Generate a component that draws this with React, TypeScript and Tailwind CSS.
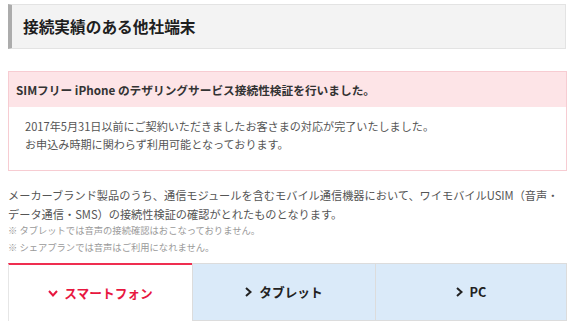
import React from "react";

const font = { fontFamily: '"Noto Sans CJK JP", "Noto Sans", sans-serif' };

function ChevronDown() {
  return (
    <svg width="10" height="7" viewBox="0 0 10 7" className="mr-[6px]">
      <polyline points="1,1 5,5.5 9,1" fill="none" stroke="#e8173f" strokeWidth="2" />
    </svg>
  );
}

function ChevronRight() {
  return (
    <svg width="7" height="10" viewBox="0 0 7 10" className="mr-[7px]">
      <polyline points="1,1 5.5,5 1,9" fill="none" stroke="#222" strokeWidth="2" />
    </svg>
  );
}

export default function App() {
  return (
    <div className="w-[580px] h-[334px] bg-white pt-[4px] pl-[8px] overflow-hidden" style={font}>
      <div className="w-[558px] h-[45px] border border-[#e3e3e3] border-l-[4px] border-l-[#acacac] bg-[#f3f3f3] flex items-center pl-[11px]">
        <span className="text-[15.7px] font-bold text-[#1e1e1e] leading-none">接続実績のある他社端末</span>
      </div>

      <div className="w-[559px] mt-[22px] border border-[#f7ccd2]">
        <div className="h-[35px] bg-[#fde4e7] flex items-center pl-[7px]">
          <span className="text-[11.7px] font-bold text-[#333] leading-none">
            SIMフリー iPhone のテザリングサービス接続性検証を行いました。
          </span>
        </div>
        <div className="pt-[10px] pb-[17px] pl-[16px] text-[11.1px] leading-[18px] text-[#555]">
          2017年5月31日以前にご契約いただきましたお客さまの対応が完了いたしました。
          <br />
          お申込み時期に関わらず利用可能となっております。
        </div>
      </div>

      <div className="mt-[15px] text-[11.2px] leading-[19px] text-[#555]">
        メーカーブランド製品のうち、通信モジュールを含むモバイル通信機器において、ワイモバイルUSIM（音声・
        <br />
        データ通信・SMS）の接続性検証の確認がとれたものとなります。
      </div>
      <div className="-mt-[2px] text-[9.3px] leading-[17px] text-[#9a9a9a]">
        ※ タブレットでは音声の接続確認はおこなっておりません。
        <br />
        ※ シェアプランでは音声はご利用になれません。
      </div>

      <div className="w-[559px] mt-[7px] grid grid-cols-[184px_184px_191px] h-[58px]">
        <div className="border-t-[2px] border-t-[#ef2e50] border-l border-l-[#e6e6e6] bg-white flex items-center justify-center">
          <ChevronDown />
          <span className="text-[12.7px] font-bold text-[#e8173f] leading-none">スマートフォン</span>
        </div>
        <div className="border border-[#dcdcdc] bg-[#daeaf9] flex items-center justify-center">
          <ChevronRight />
          <span className="text-[12.7px] font-bold text-[#222] leading-none">タブレット</span>
        </div>
        <div className="border border-l-0 border-[#dcdcdc] bg-[#daeaf9] flex items-center justify-center">
          <ChevronRight />
          <span className="text-[12.7px] font-bold text-[#222] leading-none">PC</span>
        </div>
      </div>
    </div>
  );
}
